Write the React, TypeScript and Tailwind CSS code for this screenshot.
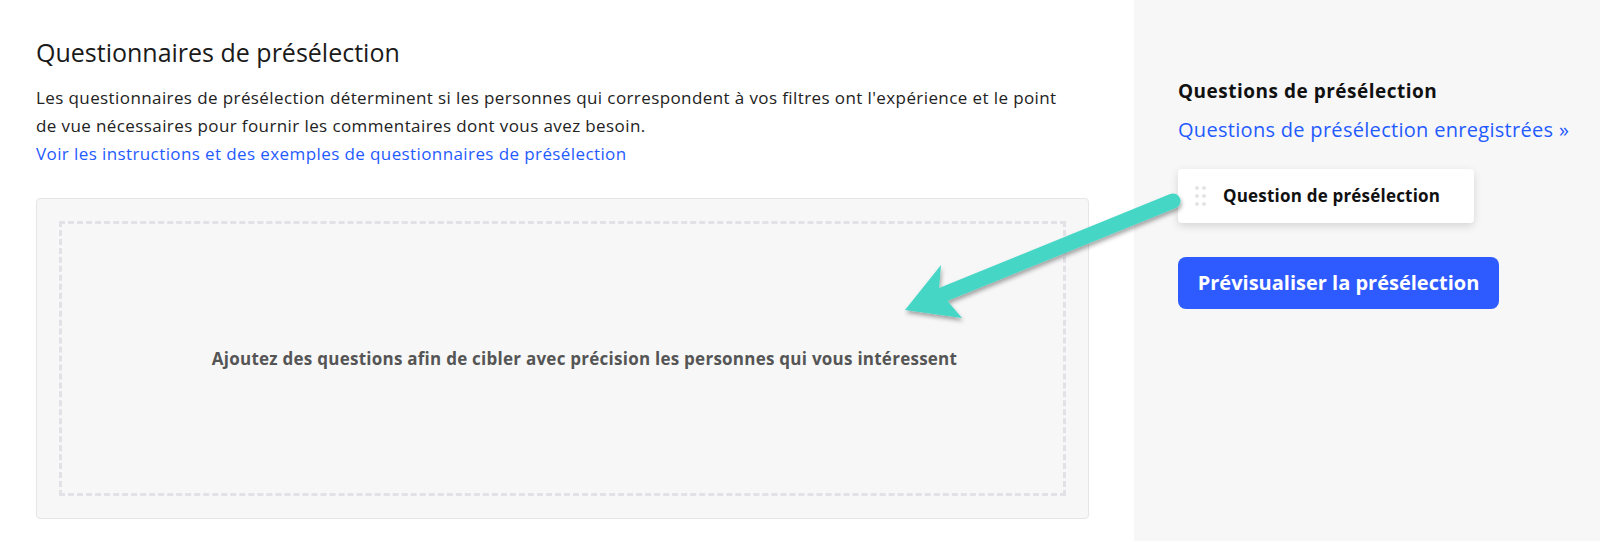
import React from 'react'

function DragDots() {
  return (
    <div className="grid grid-cols-2 gap-x-[3px] gap-y-[4px]">
      {[0, 1, 2, 3, 4, 5].map((i) => (
        <span key={i} className="w-[4px] h-[4px] rounded-full bg-[#e4e4e4]" />
      ))}
    </div>
  )
}

function Arrow() {
  return (
    <svg className="absolute inset-0 pointer-events-none" width="1600" height="541" viewBox="0 0 1600 541">
      <defs>
        <filter id="arrowShadow" x="-10%" y="-30%" width="130%" height="170%">
          <feDropShadow dx="1" dy="3" stdDeviation="2" floodColor="#000" floodOpacity="0.35" />
        </filter>
      </defs>
      <g filter="url(#arrowShadow)" fill="#45d6c6">
        <path d="M1173 201 L937 297" stroke="#45d6c6" strokeWidth="15" strokeLinecap="round" />
        <polygon points="905,310 941,265 939,289 950,304 962,318" />
      </g>
    </svg>
  )
}

export default function App() {
  return (
    <div className="relative flex w-[1600px] h-[541px] bg-white font-['Open_Sans',sans-serif] overflow-hidden">
      <main className="w-[1134px] pl-9 pr-[45px] pt-9">
        <h1 className="text-[25px] leading-8 font-normal text-[#1a1a1a]">Questionnaires de présélection</h1>
        <div className="mt-4 text-[17px] leading-7 tracking-[0.4px] text-[#222]">
          <p className="whitespace-nowrap">
            Les questionnaires de présélection déterminent si les personnes qui correspondent à vos filtres ont l'expérience et le point
            <br />
            de vue nécessaires pour fournir les commentaires dont vous avez besoin.
          </p>
          <a className="text-[#1f5bff]">Voir les instructions et des exemples de questionnaires de présélection</a>
        </div>
        <div className="mt-[30px] h-[321px] rounded border border-[#e6e6e6] bg-[#f7f7f7] p-[22px]">
          <div className="h-full border-[3px] border-dashed border-[#e1e1e6] flex items-center justify-center pl-[44px]">
            <p className="text-[17px] font-bold tracking-[0.25px] text-[#555]">
              Ajoutez des questions afin de cibler avec précision les personnes qui vous intéressent
            </p>
          </div>
        </div>
      </main>
      <aside className="flex-1 bg-[#f7f7f7] pl-11 pt-[79px]">
        <h2 className="text-[19px] leading-6 font-bold tracking-[0.5px] text-[#111]">Questions de présélection</h2>
        <a className="block mt-[15px] text-[20px] leading-6 tracking-[0.3px] text-[#1f5bff]">Questions de présélection enregistrées »</a>
        <div className="mt-[27px] w-[296px] h-[54px] rounded bg-white shadow-[0_3px_8px_rgba(0,0,0,0.14)] flex items-center pl-[17px]">
          <DragDots />
          <span className="ml-[17px] text-[17px] font-bold tracking-[0.2px] text-[#111]">Question de présélection</span>
        </div>
        <button className="mt-[34px] w-[321px] h-[52px] rounded-lg bg-[#2d5bff] text-white text-[20px] font-bold">
          Prévisualiser la présélection
        </button>
      </aside>
      <Arrow />
    </div>
  )
}
